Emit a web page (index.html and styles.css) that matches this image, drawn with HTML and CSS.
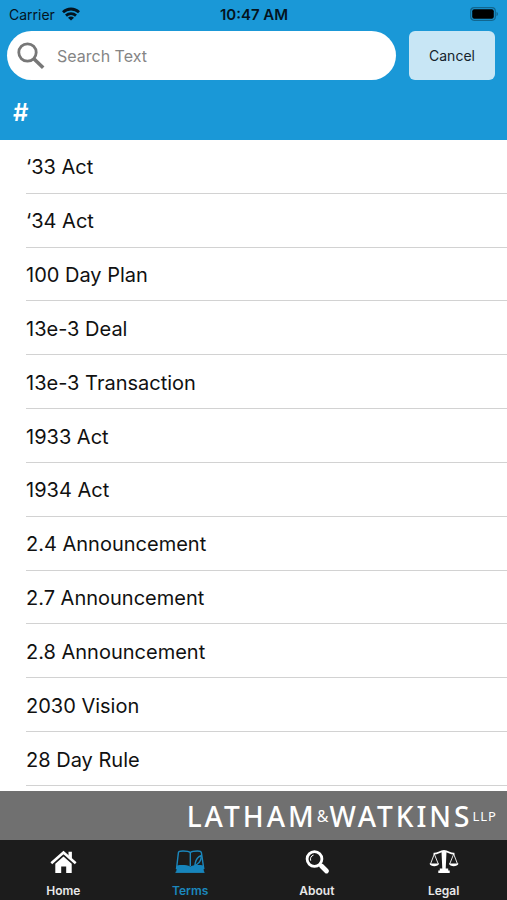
FILE: index.html
```html
<!DOCTYPE html>
<html lang="en">
<head>
    <meta charset="UTF-8">
    <meta name="viewport" content="width=device-width, initial-scale=1">
    <title>Terms</title>
    <link rel="stylesheet" href="styles.css">
</head>
<body>

<header class="header">
    <div class="status">
        <div class="carrier">
            <span>Carrier</span>
            <svg width="18" height="14" viewBox="0 0 18 14" aria-hidden="true">
                <g fill="none" stroke="#04141e" stroke-width="2.8">
                    <path d="M1 5.2C5.5.9 12.5.9 17 5.2"/>
                    <path d="M4 8.6c2.8-2.6 7.2-2.6 10 0"/>
                </g>
                <path d="M9 13.6L6 10.7c1.7-1.5 4.3-1.5 6 0z" fill="#04141e"/>
            </svg>
        </div>
        <time class="clock">10:47 AM</time>
        <svg class="battery" width="29" height="14" viewBox="0 0 29 14" aria-hidden="true">
            <rect x=".7" y=".7" width="24.6" height="12.6" rx="3.5" fill="none" stroke="#11668f" stroke-width="1.2"/>
            <rect x="2.2" y="2.2" width="21.6" height="9.6" rx="2" fill="#000"/>
            <path d="M26.5 4.8c2 .8 2 3.6 0 4.4z" fill="#11668f"/>
        </svg>
    </div>
    <form class="search">
        <label class="search-box">
            <svg width="28" height="28" viewBox="0 0 28 28" fill="none" stroke="#777" aria-hidden="true">
                <circle cx="10.5" cy="10.5" r="8.7" stroke-width="2.8"/>
                <path d="M16.8 16.8l9.4 9" stroke-width="3.6"/>
            </svg>
            <input type="text" placeholder="Search Text" aria-label="Search Text">
        </label>
        <button type="button" class="cancel">Cancel</button>
    </form>
    <h2 class="section">#</h2>
</header>

<ul class="terms">
    <li>‘33 Act</li>
    <li>‘34 Act</li>
    <li>100 Day Plan</li>
    <li>13e-3 Deal</li>
    <li>13e-3 Transaction</li>
    <li>1933 Act</li>
    <li>1934 Act</li>
    <li>2.4 Announcement</li>
    <li>2.7 Announcement</li>
    <li>2.8 Announcement</li>
    <li>2030 Vision</li>
    <li>28 Day Rule</li>
</ul>

<div class="brand">
    <span>LATHAM</span><span class="small">&amp;</span><span>WATKINS</span><span class="small llp">LLP</span>
</div>

<nav class="tabs">
    <a href="#home">
        <svg width="30" height="26" viewBox="0 0 30 26" aria-hidden="true">
            <path d="M3.3 14.3L15.5 3.5l12.2 10.8" fill="none" stroke="#fff" stroke-width="2.6"/>
            <path d="M20.5 2.8h3.4v7l-3.4-3z" fill="#fff"/>
            <path d="M7.3 14.8l8.2-7.3 8.2 7.3V24h-5.5v-6.5h-5V24H7.3z" fill="#fff"/>
        </svg>
        <span>Home</span>
    </a>
    <a href="#terms" class="active">
        <svg width="30" height="26" viewBox="0 0 30 26" aria-hidden="true">
            <g fill="none" stroke="#1b87bd" stroke-width="1.4">
                <path d="M1.5 20L3.4 3.6C3.5 2.4 5 2 8 2c3.500 0 6 .4 7.300 1.600C16.600 2.400 19 2 22.500 2c2.600 0 3.600.4 3.900 1.600L28.800 20"/>
                <path d="M15.3 3.6V17"/>
                <path d="M26.300 6.500c-2.800 1-5.300 4-6 7.500l-.5 3 2.500-2c2.500-1.500 4-4.500 4-8.500z"/>
            </g>
            <path d="M2 16.4c5-.8 9.500-.6 13.300 1 4-1.600 8-1.800 12.900-1l.8 6.600H1.200z" fill="#1685bd"/>
            <path d="M.5 23.300h29" stroke="#1b87bd" stroke-width="1.2"/>
        </svg>
        <span>Terms</span>
    </a>
    <a href="#about">
        <svg width="30" height="26" viewBox="0 0 30 26" fill="none" stroke="#fff" aria-hidden="true">
            <circle cx="12.5" cy="10" r="7.4" stroke-width="2.8"/>
            <path d="M8.7 11.7c-.8-2.6.4-4.9 2.8-5.6" stroke-width="1"/>
            <path d="M17.8 15.5l1.6 1.500" stroke-width="3"/>
            <path d="M19.5 17l5 5" stroke-width="4.8" stroke-linecap="round"/>
        </svg>
        <span>About</span>
    </a>
    <a href="#legal">
        <svg width="30" height="26" viewBox="0 0 30 26" aria-hidden="true">
            <path d="M4.5 4.6c4 .8 6-2.600 10.500-2.600s6.500 3.400 10.500 2.600" fill="none" stroke="#fff" stroke-width="1.8"/>
            <path d="M12.5 2.5h5L16.700 20h-3.400zM10.800 19.500h8.400v2h1.500v2.500H9.300v-2.500h1.500z" fill="#fff"/>
            <path d="M5.3 5L1.5 15M5.300 5l4 10M24.700 5l-4 10M24.700 5l3.800 10" fill="none" stroke="#fff" stroke-width=".9"/>
            <path d="M.5 14.6h9.600c-.8 3.600-8.800 3.600-9.600 0zM19.900 14.600h9.600c-.8 3.600-8.800 3.600-9.600 0z" fill="#fff"/>
        </svg>
        <span>Legal</span>
    </a>
</nav>

</body>
</html>
```

FILE: styles.css
```css
* {
    box-sizing: border-box;
}

body {
    display: flex;
    flex-direction: column;
    min-height: 100vh;
    margin: 0;
    background: #fff;
    color: #111;
    font-family: Inter, "Liberation Sans", sans-serif;
}

/* header */
.header {
    background: #1a98d7;
}

.status {
    display: grid;
    grid-template-columns: 1fr auto 1fr;
    align-items: center;
    height: 28px;
    padding: 0 8px 0 9px;
    color: #04141e;
    font-size: 14px;
}

.carrier {
    display: flex;
    align-items: center;
    gap: 7px;
}

.clock {
    font-size: 15px;
    font-weight: 600;
}

.battery {
    justify-self: end;
}

.search {
    display: flex;
    gap: 13px;
    padding: 3px 12px 0 7px;
}

.search-box {
    display: flex;
    flex: 1;
    align-items: center;
    gap: 12px;
    min-width: 0;
    height: 49px;
    padding: 0 16px 0 10px;
    border-radius: 25px;
    background: #fff;
}

.search-box input {
    flex: 1;
    min-width: 0;
    padding: 0;
    border: 0;
    outline: 0;
    background: transparent;
    font: inherit;
    font-size: 16px;
}

.search-box input::placeholder {
    color: #858585;
}

.cancel {
    width: 86px;
    border: 0;
    border-radius: 6px;
    background: #c8e6f5;
    color: #15232c;
    font: inherit;
    font-size: 14px;
}

.section {
    margin: 0;
    padding: 22px 13px 16px;
    color: #fff;
    font-size: 24px;
    line-height: 22px;
    font-weight: 600;
}

/* list of terms */
.terms {
    display: flex;
    flex: 1;
    flex-direction: column;
    margin: 0;
    padding: 0 0 5px 26px;
    list-style: none;
}

.terms li {
    display: flex;
    flex: 1;
    align-items: center;
    min-height: 44px;
    padding-top: 2px;
    border-bottom: 1px solid #d2d2d2;
    font-size: 20px;
}

/* brand strip */
.brand {
    display: flex;
    justify-content: flex-end;
    align-items: center;
    height: 49px;
    padding-right: 10px;
    background: #707070;
    color: #fff;
    font-family: "Noto Sans", sans-serif;
    font-size: 28px;
    font-weight: 500;
    letter-spacing: 3px;
}

.brand .small {
    font-size: 16px;
    font-weight: 400;
    letter-spacing: 1px;
}

.brand .llp {
    font-size: 13px;
}

/* tab bar */
.tabs {
    display: flex;
    height: 60px;
    background: #1c1c1c;
}

.tabs a {
    display: flex;
    flex: 1;
    flex-direction: column;
    align-items: center;
    gap: 7px;
    padding-top: 9px;
    color: #e8e8e8;
    font-size: 12px;
    line-height: 18px;
    font-weight: 600;
    text-decoration: none;
}

.tabs .active {
    color: #1b87bd;
}
```
